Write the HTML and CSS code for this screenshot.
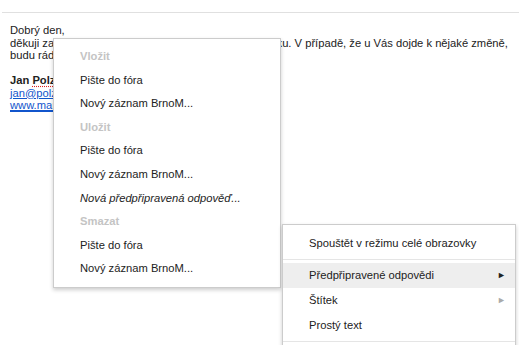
FILE: index.html
```html
<!DOCTYPE html>
<html lang="cs">
<head>
    <meta charset="UTF-8">
    <meta name="viewport" content="width=device-width, initial-scale=1.0">
    <title>Předpřipravené odpovědi</title>
    <link rel="stylesheet" href="styles.css">
</head>
<body>
    <div class="topbar"></div>

    <div class="mail">
        <div>Dobrý den,</div>
        <div>děkuji za Vaši zprávu, kterou jsme už obdrželi v pořádku. V případě, že u Vás dojde k nějaké změně,</div>
        <div>budu rád, když mi dáte vědět.</div>
        <br>
        <div><strong>Jan <span class="typo">Polzer</span></strong></div>
        <div><a href="#">jan@polzer-marketing.cz</a></div>
        <div><a href="#"><span class="typo">www.marketingpolzer-brnomapa-odpovedi.cz</span></a></div>
    </div>

    <div class="menu menu-left">
        <div class="menu-head">Vložit</div>
        <div class="menu-item">Pište do fóra</div>
        <div class="menu-item">Nový záznam BrnoM...</div>
        <div class="menu-head">Uložit</div>
        <div class="menu-item">Pište do fóra</div>
        <div class="menu-item">Nový záznam BrnoM...</div>
        <div class="menu-item italic">Nová předpřipravená odpověď...</div>
        <div class="menu-head">Smazat</div>
        <div class="menu-item">Pište do fóra</div>
        <div class="menu-item">Nový záznam BrnoM...</div>
    </div>

    <div class="menu menu-right">
        <div class="menu-row">Spouštět v režimu celé obrazovky</div>
        <div class="menu-sep"></div>
        <div class="menu-row active">Předpřipravené odpovědi <span class="arrow">&#9658;</span></div>
        <div class="menu-row">Štítek <span class="arrow muted">&#9658;</span></div>
        <div class="menu-row">Prostý text</div>
        <div class="menu-sep"></div>
    </div>
</body>
</html>
```

FILE: styles.css
```css
body {
    margin: 0;
    font-family: "Liberation Sans", Arial, sans-serif;
    color: #222;
    background-color: #fff;
    position: relative;
    height: 345px;
    overflow: hidden;
}
.topbar {
    height: 12px;
    margin-left: 2px;
    border-bottom: 1px solid #e0e0e0;
}
.mail {
    padding: 11px 0 0 10px;
    font-size: 11.2px;
    line-height: 12.5px;
    white-space: nowrap;
}
.mail a {
    color: #1155cc;
}
.typo {
    text-decoration: underline dotted #d22;
    text-underline-offset: 2px;
}
.mail a .typo {
    text-decoration: underline;
    text-decoration-color: #1155cc;
    border-bottom: 1px dotted #d22;
}
.menu {
    position: absolute;
    background-color: #fff;
    border: 1px solid rgba(0, 0, 0, 0.2);
    box-shadow: 0 2px 4px rgba(0, 0, 0, 0.2);
    font-size: 11.2px;
    color: #222;
    box-sizing: border-box;
}
.menu-left {
    left: 53px;
    top: 38px;
    width: 228px;
    padding: 6px 0 6px;
}
.menu-head, .menu-item {
    height: 23.6px;
    line-height: 23.6px;
    padding-left: 26px;
}
.menu-head {
    color: #c4c4c4;
    font-weight: bold;
}
.italic {
    font-style: italic;
}
.menu-right {
    left: 282px;
    top: 224px;
    width: 234px;
    padding-top: 6px;
    height: 140px;
}
.menu-row {
    height: 25px;
    line-height: 25px;
    padding-left: 26px;
    padding-right: 9px;
    display: flex;
    justify-content: space-between;
}
.menu-row.active {
    background-color: #eee;
}
.menu-sep {
    height: 1px;
    margin: 3px 0 3px;
    background-color: #e5e5e5;
}
.arrow {
    font-size: 9px;
    color: #222;
}
.arrow.muted {
    color: #aaa;
}
```
